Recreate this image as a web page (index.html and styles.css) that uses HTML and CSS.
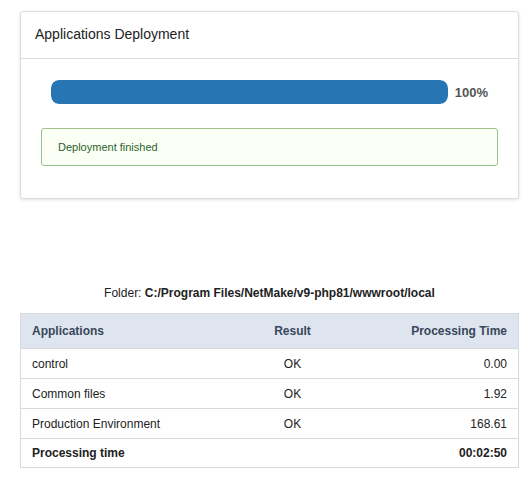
FILE: index.html
```html
<!DOCTYPE html>
<html>
<head>
<meta charset="utf-8">
<link rel="stylesheet" href="styles.css">
</head>
<body>
<div class="page">
  <div class="card">
    <div class="card-header">Applications Deployment</div>
    <div class="card-body">
      <div class="progress-row">
        <div class="progress"><div class="progress-bar" style="width:100%"></div></div>
        <span class="progress-label">100%</span>
      </div>
      <div class="alert">Deployment finished</div>
    </div>
  </div>

  <div class="folder">Folder: <b>C:/Program Files/NetMake/v9-php81/wwwroot/local</b></div>

  <table class="results">
    <colgroup>
      <col class="c-app"><col class="c-res"><col class="c-time">
    </colgroup>
    <thead>
      <tr><th class="left">Applications</th><th class="center">Result</th><th class="right">Processing Time</th></tr>
    </thead>
    <tbody>
      <tr><td class="left">control</td><td class="center">OK</td><td class="right">0.00</td></tr>
      <tr><td class="left">Common files</td><td class="center">OK</td><td class="right">1.92</td></tr>
      <tr><td class="left">Production Environment</td><td class="center">OK</td><td class="right">168.61</td></tr>
      <tr class="total"><td class="left">Processing time</td><td class="center"></td><td class="right">00:02:50</td></tr>
    </tbody>
  </table>
</div>
</body>
</html>
```
FILE: styles.css
```css
html, body {
  margin: 0;
  padding: 0;
  background: #ffffff;
}
body {
  font-family: "Liberation Sans", Arial, sans-serif;
  color: #222;
}
.page {
  padding: 11px 11px 0 20px;
}
.card {
  border: 1px solid #dddddd;
  border-radius: 3px;
  box-shadow: 0 1px 3px rgba(0,0,0,0.12);
  background: #fff;
}
.card-header {
  height: 46px;
  line-height: 44px;
  padding: 0 14px;
  font-size: 14px;
  color: #222;
  border-bottom: 1px solid #dddddd;
}
.card-body {
  padding: 21px 20px 32px 20px;
}
.progress-row {
  display: flex;
  align-items: center;
  gap: 7px;
  padding: 0 10px;
  height: 24px;
}
.progress {
  flex: 1 1 auto;
  height: 24px;
  border-radius: 8px;
  background: #e8ecf0;
  overflow: hidden;
}
.progress-bar {
  height: 100%;
  background: #2775b2;
  border-radius: 8px;
}
.progress-label {
  font-size: 13px;
  font-weight: bold;
  color: #555;
}
.alert {
  margin-top: 24px;
  height: 36px;
  line-height: 36px;
  padding: 0 16px;
  border: 1px solid #9dc38e;
  border-radius: 3px;
  background: #fbfff5;
  color: #2b5f2c;
  font-size: 11px;
}
.folder {
  margin-top: 85px;
  text-align: center;
  font-size: 12px;
  color: #222;
  height: 18px;
  line-height: 18px;
}
.results {
  margin-top: 11px;
  width: 100%;
  border-collapse: collapse;
  font-size: 12px;
  border: 1px solid #d6dae0;
}
.c-app { width: 232px; }
.c-res { width: 80px; }
.results th {
  background: #dfe5ee;
  color: #37475b;
  font-weight: bold;
  height: 34px;
  padding: 0 11px;
}
.results td {
  height: 29px;
  padding: 0 11px;
  border-top: 1px solid #d6dae0;
  color: #222;
}
.results .total td {
  font-weight: bold;
  height: 28px;
}
.left { text-align: left; }
.center { text-align: center; }
.right { text-align: right; }
```
